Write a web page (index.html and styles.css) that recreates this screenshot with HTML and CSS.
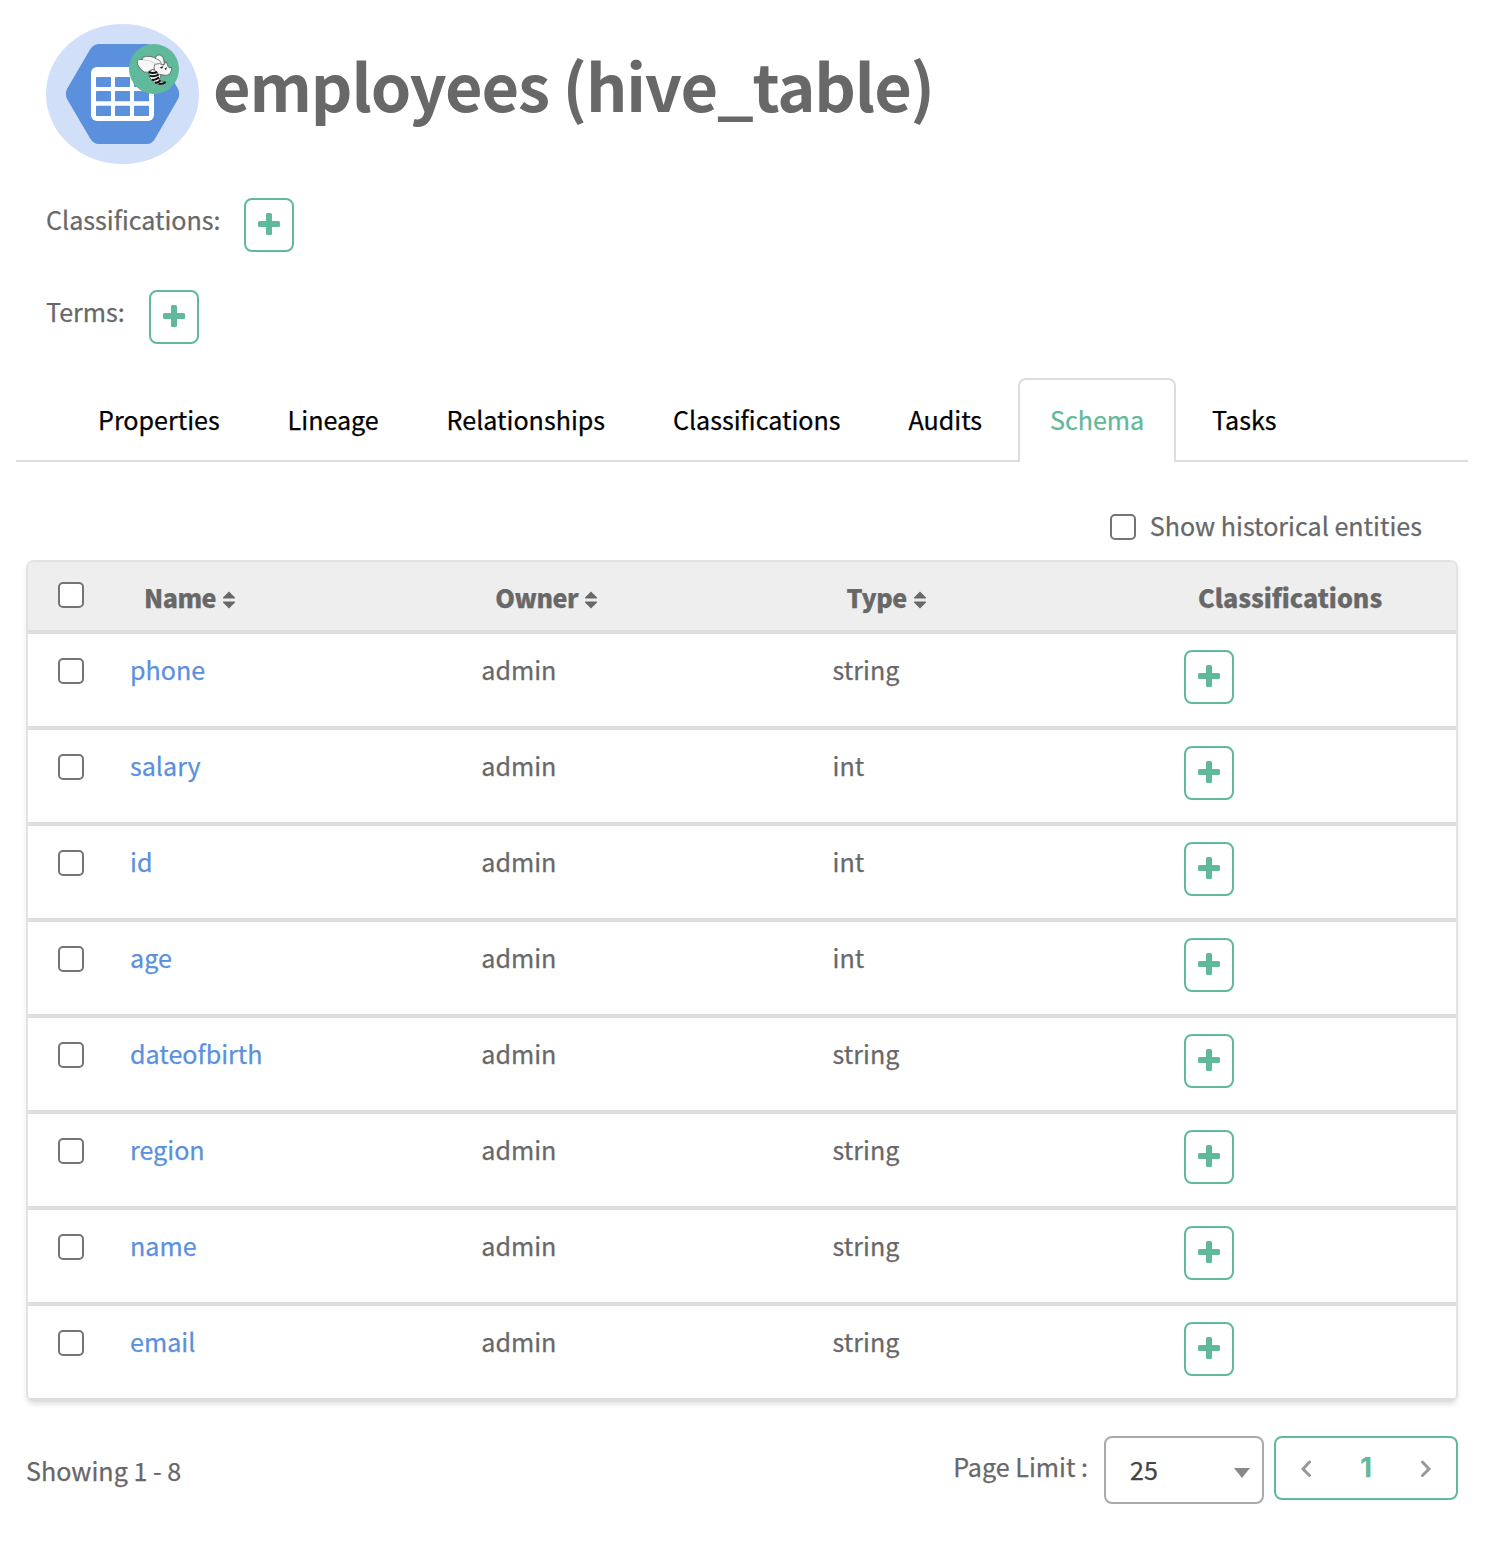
FILE: index.html
```html
<!DOCTYPE html>
<html lang="en">
<head>
<meta charset="utf-8">
<title>employees (hive_table)</title>
<link rel="stylesheet" href="styles.css">
</head>
<body>
<svg class="defs" aria-hidden="true">
  <symbol id="plus" viewBox="0 0 22 22"><path d="M9.500 0h3q1.500 0 1.500 1.500V8h6.500q1.500 0 1.500 1.500v3q0 1.500-1.500 1.500H14v6.500q0 1.500-1.500 1.500h-3Q8 22 8 20.500V14H1.500Q0 14 0 12.500v-3Q0 8 1.500 8H8V1.500Q8 0 9.500 0z"/></symbol>
  <symbol id="sort" viewBox="0 0 14 18"><path d="M7 .5 13 6.500q.4.900-.6.900H1.600Q.6 7.400 1 6.500zM7 17.500l6-6q.4-.9-.6-.9H1.600q-1 0-.6.900z"/></symbol>
</svg>
<header class="entity">
  <svg class="logo" viewBox="30 30 459 420">
    <ellipse cx="259.500" cy="240" rx="229.500" ry="210" fill="#d2dff9"/>
    <path d="M188 90H333Q349 91 357 105L426 224Q433 240 426 255L357 374Q349 389 333 390H188Q172 389 163 374L93 255Q87 240 93 225L163 105Q172 91 188 90z" fill="#5b90dd"/>
    <rect x="165" y="159" width="189" height="162" rx="18" fill="#fff"/>
    <g fill="#5b90dd">
      <rect x="180" y="189" width="45" height="30" rx="2"/><rect x="237" y="189" width="45" height="30" rx="2"/><rect x="294" y="189" width="45" height="30" rx="2"/>
      <rect x="180" y="231" width="45" height="31" rx="2"/><rect x="237" y="231" width="45" height="31" rx="2"/><rect x="294" y="231" width="45" height="31" rx="2"/>
      <rect x="180" y="275" width="45" height="31" rx="2"/><rect x="237" y="275" width="45" height="31" rx="2"/><rect x="294" y="275" width="45" height="31" rx="2"/>
    </g>
    <circle cx="354" cy="165" r="75" fill="#61b99b"/>
    <g stroke="#444" stroke-width="2" stroke-linejoin="round" fill="#f7f7f7">
      <path d="M339 172Q350 162 360 170L374 181Q377 190 368 196Q372 202 388 204L384 211Q369 212 358 207Q344 199 340 188z"/>
      <path d="M358 136Q357 125 367 123Q380 122 383 137L385 148Q379 158 366 152z"/>
      <path d="M320 130Q344 122 362 135Q378 141 376 154Q365 166 345 168Q335 178 325 174Q310 166 305 151Q301 139 309 136L320 137z"/>
      <path d="M356 151Q371 145 383 154L390 142L396 157Q399 165 406 159Q409 167 402 179Q394 187 381 183L366 180Q350 169 356 151z"/>
    </g>
    <g fill="none" stroke="#111" stroke-width="6">
      <path d="M339 174Q350 180 364 174"/><path d="M341 185Q353 190 368 182"/><path d="M347 197Q357 201 369 190"/><path d="M357 206Q368 206 373 199"/><path d="M368 209Q380 211 389 204"/>
    </g>
    <path d="M320 137Q341 137 358 149" fill="none" stroke="#bbb" stroke-width="2"/>
    <path d="M371 160l11-3-4 7zM385 164l8-4-3 8z" fill="#111"/>
  </svg>
  <h1 class="title">employees (hive_table)</h1>
</header>
<section class="tags">
  <div class="tag-row"><span class="tag-label label-class">Classifications:</span><button class="add"><svg><use href="#plus"/></svg></button></div>
  <div class="tag-row"><span class="tag-label label-terms">Terms:</span><button class="add"><svg><use href="#plus"/></svg></button></div>
</section>
<nav class="tabs">
  <a class="tab">Properties</a><a class="tab">Lineage</a><a class="tab">Relationships</a><a class="tab">Classifications</a><a class="tab">Audits</a><a class="tab active">Schema</a><a class="tab">Tasks</a>
</nav>
<main class="schema">
  <label class="history"><input type="checkbox" class="check"><span class="history-text">Show historical entities</span></label>
  <div class="table">
    <div class="row head"><span class="cell"><input type="checkbox" class="check"></span><span class="cell"><span class="sortable">Name</span><svg class="sort"><use href="#sort"/></svg></span><span class="cell"><span class="sortable">Owner</span><svg class="sort"><use href="#sort"/></svg></span><span class="cell"><span class="sortable">Type</span><svg class="sort"><use href="#sort"/></svg></span><span class="cell">Classifications</span></div>
    <div class="row"><span class="cell"><input type="checkbox" class="check"></span><a class="cell link">phone</a><span class="cell">admin</span><span class="cell">string</span><span class="cell action"><button class="add"><svg><use href="#plus"/></svg></button></span></div>
    <div class="row"><span class="cell"><input type="checkbox" class="check"></span><a class="cell link">salary</a><span class="cell">admin</span><span class="cell">int</span><span class="cell action"><button class="add"><svg><use href="#plus"/></svg></button></span></div>
    <div class="row"><span class="cell"><input type="checkbox" class="check"></span><a class="cell link">id</a><span class="cell">admin</span><span class="cell">int</span><span class="cell action"><button class="add"><svg><use href="#plus"/></svg></button></span></div>
    <div class="row"><span class="cell"><input type="checkbox" class="check"></span><a class="cell link">age</a><span class="cell">admin</span><span class="cell">int</span><span class="cell action"><button class="add"><svg><use href="#plus"/></svg></button></span></div>
    <div class="row"><span class="cell"><input type="checkbox" class="check"></span><a class="cell link">dateofbirth</a><span class="cell">admin</span><span class="cell">string</span><span class="cell action"><button class="add"><svg><use href="#plus"/></svg></button></span></div>
    <div class="row"><span class="cell"><input type="checkbox" class="check"></span><a class="cell link">region</a><span class="cell">admin</span><span class="cell">string</span><span class="cell action"><button class="add"><svg><use href="#plus"/></svg></button></span></div>
    <div class="row"><span class="cell"><input type="checkbox" class="check"></span><a class="cell link">name</a><span class="cell">admin</span><span class="cell">string</span><span class="cell action"><button class="add"><svg><use href="#plus"/></svg></button></span></div>
    <div class="row"><span class="cell"><input type="checkbox" class="check"></span><a class="cell link">email</a><span class="cell">admin</span><span class="cell">string</span><span class="cell action"><button class="add"><svg><use href="#plus"/></svg></button></span></div>
  </div>
  <footer class="footer">
    <span class="showing">Showing 1 - 8</span>
    <span class="limit-label">Page Limit :</span>
    <div class="select"><span>25</span><svg class="caret" viewBox="0 0 16 10"><path d="M0 0h16L8 10z"/></svg></div>
    <div class="pager">
      <svg class="chev" viewBox="0 0 12 18"><path d="M9.500 3 3 10l6.500 6.500"/></svg>
      <b class="page">1</b>
      <svg class="chev" viewBox="0 0 12 18"><path d="M2.500 3 9 10l-6.500 6.500"/></svg>
    </div>
  </footer>
</main>
</body>
</html>
```
FILE: styles.css
```css
* { box-sizing: border-box; }
body {
  margin: 0;
  padding: 24px 30px 0 16px;
  background: #fff;
  color: #686868;
  font-family: "Noto Sans CJK SC", "Noto Sans", sans-serif;
  font-size: 25.1px;
  line-height: 40px;
  -webkit-text-stroke: .25px;
}
.defs { position: absolute; width: 0; height: 0; }
.entity { display: flex; height: 140px; padding-left: 30px; }
.logo { width: 153px; height: 140px; flex: none; }
.title {
  margin: 11px 0 0 14px;
  font-size: 64.8px;
  line-height: 98px;
  font-weight: 700;
  letter-spacing: -1.15px;
  white-space: nowrap;
  -webkit-text-stroke: 0;
}
.tags { display: flex; flex-direction: column; gap: 38px; padding: 34px 0 0 30px; }
.tag-row { display: flex; height: 54px; }
.tag-label { line-height: 42px; white-space: nowrap; }
.label-class { width: 198px; }
.label-terms { width: 103px; }
.add {
  display: flex;
  justify-content: center;
  width: 50px;
  height: 54px;
  margin: 0;
  padding: 13px 0 0;
  border: 2px solid #61b99b;
  border-radius: 8px;
  background: #fff;
}
.add svg { width: 22px; height: 22px; fill: #61b99b; }
.tabs {
  display: flex;
  gap: 3.85px;
  height: 84px;
  margin-top: 34px;
  padding-left: 50px;
  color: #000;
  box-shadow: inset 0 -2px #ddd;
}
.tab {
  padding: 19px 30px 0;
  border: 2px solid transparent;
  border-bottom: 0;
  line-height: 40px;
  white-space: nowrap;
}
.tab.active {
  border-color: #ddd;
  border-radius: 8px 8px 0 0;
  background: #fff;
  color: #61b99b;
}
.schema { padding: 45px 0 0 10px; margin-right: 10px; }
.history { display: flex; align-items: center; justify-content: flex-end; height: 40px; gap: 14px; padding-right: 36px; }
.history-text { padding-bottom: 5px; }
.check {
  appearance: none;
  display: block;
  width: 26px;
  height: 26px;
  margin: 0;
  border: 2px solid #747474;
  border-radius: 5px;
  background: #fff;
}
.table {
  margin-top: 13px;
  width: 1432px;
  border: 2px solid #e2e2e2;
  border-bottom: 0;
  border-radius: 8px;
  overflow: hidden;
  box-shadow: 0 3px 4px rgba(0, 0, 0, .1);
}
.row {
  display: grid;
  grid-template-columns: 86px repeat(3, 351.3px) 1fr;
  height: 96px;
  border-bottom: 4px solid #ddd;
}
.cell { padding: 15px 16px; line-height: 40px; white-space: nowrap; }
.cell.action { padding-top: 16px; }
.cell:first-child { padding: 24px 30px; }
.row.head { height: 72px; background: #eee; font-weight: 900; }
.head .cell { padding: 15px 30px; }
.head .cell:first-child { padding-top: 20px; }
.sortable { letter-spacing: -.5px; }
.sort { width: 14px; height: 18px; margin-left: 6px; vertical-align: -1px; fill: #686868; }
.link { color: #5b90dd; }
.footer { display: flex; height: 68px; margin-top: 34px; }
.showing { line-height: 68px; margin-right: auto; }
.limit-label { line-height: 60px; margin-right: 16px; }
.select {
  display: flex;
  justify-content: space-between;
  width: 160px;
  height: 68px;
  padding: 0 12px 0 24px;
  border: 2px solid #aaa;
  border-radius: 8px;
  color: #444;
  line-height: 62px;
}
.caret { width: 16px; height: 10px; margin-top: 30px; fill: #888; }
.pager {
  display: flex;
  align-items: center;
  justify-content: space-between;
  width: 184px;
  height: 64px;
  margin-left: 10px;
  padding: 0 24px;
  border: 2px solid #61b99b;
  border-radius: 8px;
  color: #61b99b;
}
.page { font-family: Inter, sans-serif; font-size: 27px; }
.chev { width: 12px; height: 18px; fill: none; stroke: #999; stroke-width: 3; stroke-linecap: round; }
```
